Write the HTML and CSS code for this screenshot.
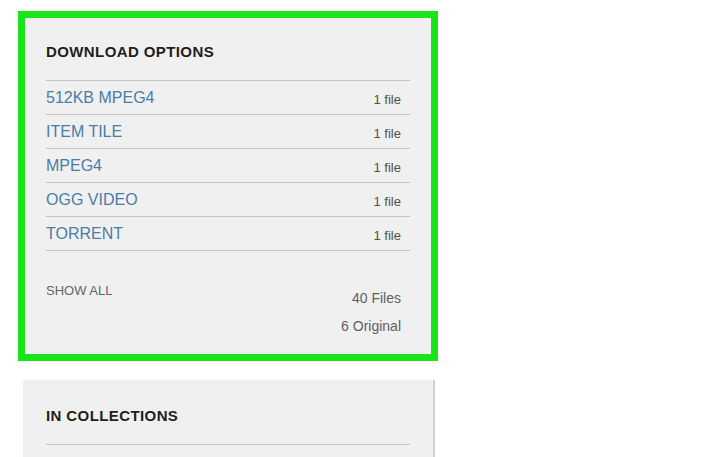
FILE: index.html
```html
<!DOCTYPE html>
<html lang="en">
<head>
    <meta charset="UTF-8">
    <meta name="viewport" content="width=device-width, initial-scale=1.0">
    <title>Download options</title>
    <link rel="stylesheet" href="styles.css">
</head>
<body>
    <div class="sidebar">
        <section class="box highlighted">
            <h2>DOWNLOAD OPTIONS</h2>
            <ul class="formats">
                <li><a href="#">512KB MPEG4</a><span class="count">1 file</span></li>
                <li><a href="#">ITEM TILE</a><span class="count">1 file</span></li>
                <li><a href="#">MPEG4</a><span class="count">1 file</span></li>
                <li><a href="#">OGG VIDEO</a><span class="count">1 file</span></li>
                <li><a href="#">TORRENT</a><span class="count">1 file</span></li>
            </ul>
            <div class="summary">
                <a href="#" class="show-all">SHOW ALL</a>
                <div class="totals">
                    <span>40 Files</span>
                    <span>6 Original</span>
                </div>
            </div>
        </section>

        <section class="box">
            <h2>IN COLLECTIONS</h2>
            <ul class="collections">
                <li></li>
            </ul>
        </section>
    </div>
</body>
</html>
```

FILE: styles.css
```css
body { margin: 0; background: #fff; font-family: "Liberation Sans", Arial, sans-serif; }
.sidebar { width: 410px; padding: 16px 0 0 23px; }
.box { background: #f0f0f0; padding: 27px 23px 22px; box-shadow: 2px 0 0 #cfcfcf; margin-bottom: 24px; }
.highlighted { outline: 7px solid #1be41b; outline-offset: -2px; box-shadow: none; }
h2 { margin: 0 0 19px; font-size: 15px; line-height: 18px; letter-spacing: 0.4px; color: #1e1e1e; }

ul { list-style: none; margin: 0; padding: 0; }
.formats { border-bottom: 1px solid #c4c4c4; }
.formats li { display: flex; justify-content: space-between; align-items: baseline; border-top: 1px solid #c4c4c4; padding: 8px 9px 7px 0; height: 18px; }
.formats a { color: #4a7ca8; text-decoration: none; font-size: 16px; line-height: 18px; }
.count { color: #505050; font-size: 13px; position: relative; top: 1px; }

.summary { display: flex; justify-content: space-between; padding: 32px 9px 0 0; }
.show-all { color: #666; text-decoration: none; font-size: 13px; line-height: 16px; }
.totals { display: flex; flex-direction: column; align-items: flex-end; gap: 12px; padding-top: 7px; }
.totals span { color: #606060; font-size: 14px; line-height: 16px; }

.collections li { border-top: 1px solid #c4c4c4; height: 200px; }
```
